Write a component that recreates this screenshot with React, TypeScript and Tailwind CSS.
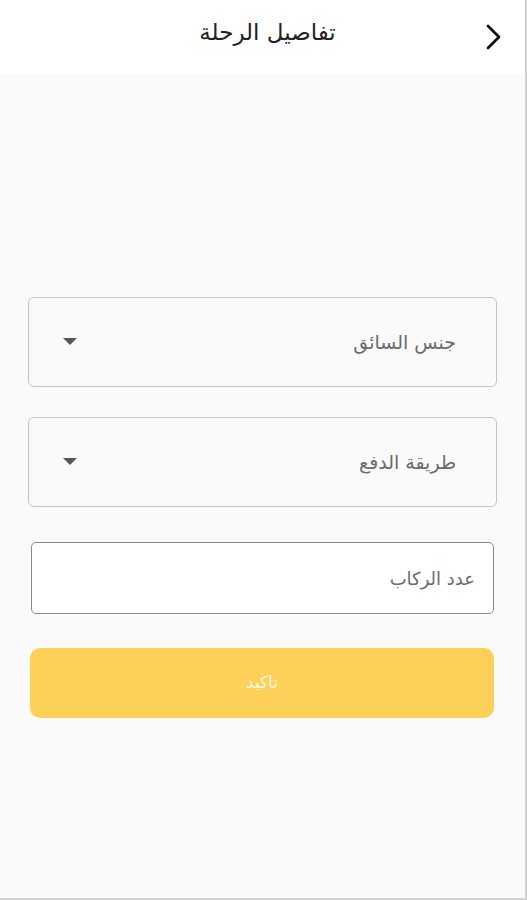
import React from 'react';

const Caret: React.FC = () => (
  <svg width="14" height="8" viewBox="0 0 14 8" className="shrink-0">
    <path d="M0 0 L14 0 L7 7 Z" fill="#555" />
  </svg>
);

const SelectBox: React.FC<{ label: string }> = ({ label }) => (
  <div className="h-[90px] mx-[28px] rounded-md border border-[#c4c4c4] bg-[#fafafa] flex items-center justify-between px-[34px]">
    <span className="text-[19px] text-[#6b6b6b] mr-[6px]">{label}</span>
    <Caret />
  </div>
);

const App: React.FC = () => {
  return (
    <div
      dir="rtl"
      className="w-[527px] h-[900px] bg-[#fafafa] flex flex-col border-r-2 border-b-2 border-[#d0d0d0]"
      style={{ fontFamily: '"DejaVu Sans", sans-serif' }}
    >
      <header className="h-[75px] bg-white flex items-center relative shrink-0">
        <button className="absolute right-[20px] top-[23px] w-[24px] h-[28px] flex items-center justify-center">
          <svg width="18" height="26" viewBox="0 0 18 26" fill="none">
            <path d="M4 2 L15 13 L4 24" stroke="#111" strokeWidth="2.8" strokeLinecap="round" strokeLinejoin="round" />
          </svg>
        </button>
        <h1 className="w-full text-center text-[23px] text-[#222] pl-[10px] pb-[10px]">تفاصيل الرحلة</h1>
      </header>

      <main className="flex flex-col pt-[222px]">
        <SelectBox label="جنس السائق" />
        <div className="h-[30px]" />
        <SelectBox label="طريقة الدفع" />
        <div className="mt-[35px] h-[72px] mr-[31px] ml-[31px] rounded-[5px] border border-[#8a8a8a] bg-white flex items-center px-[18px]">
          <span className="text-[18px] text-[#6b6b6b]">عدد الركاب</span>
        </div>
        <button className="mt-[34px] h-[70px] mr-[31px] ml-[30px] rounded-[10px] bg-[#fdd05a] flex items-center justify-center">
          <span className="text-[17px] text-[#fff6dc]">تاكيد</span>
        </button>
      </main>
    </div>
  );
};

export default App;
